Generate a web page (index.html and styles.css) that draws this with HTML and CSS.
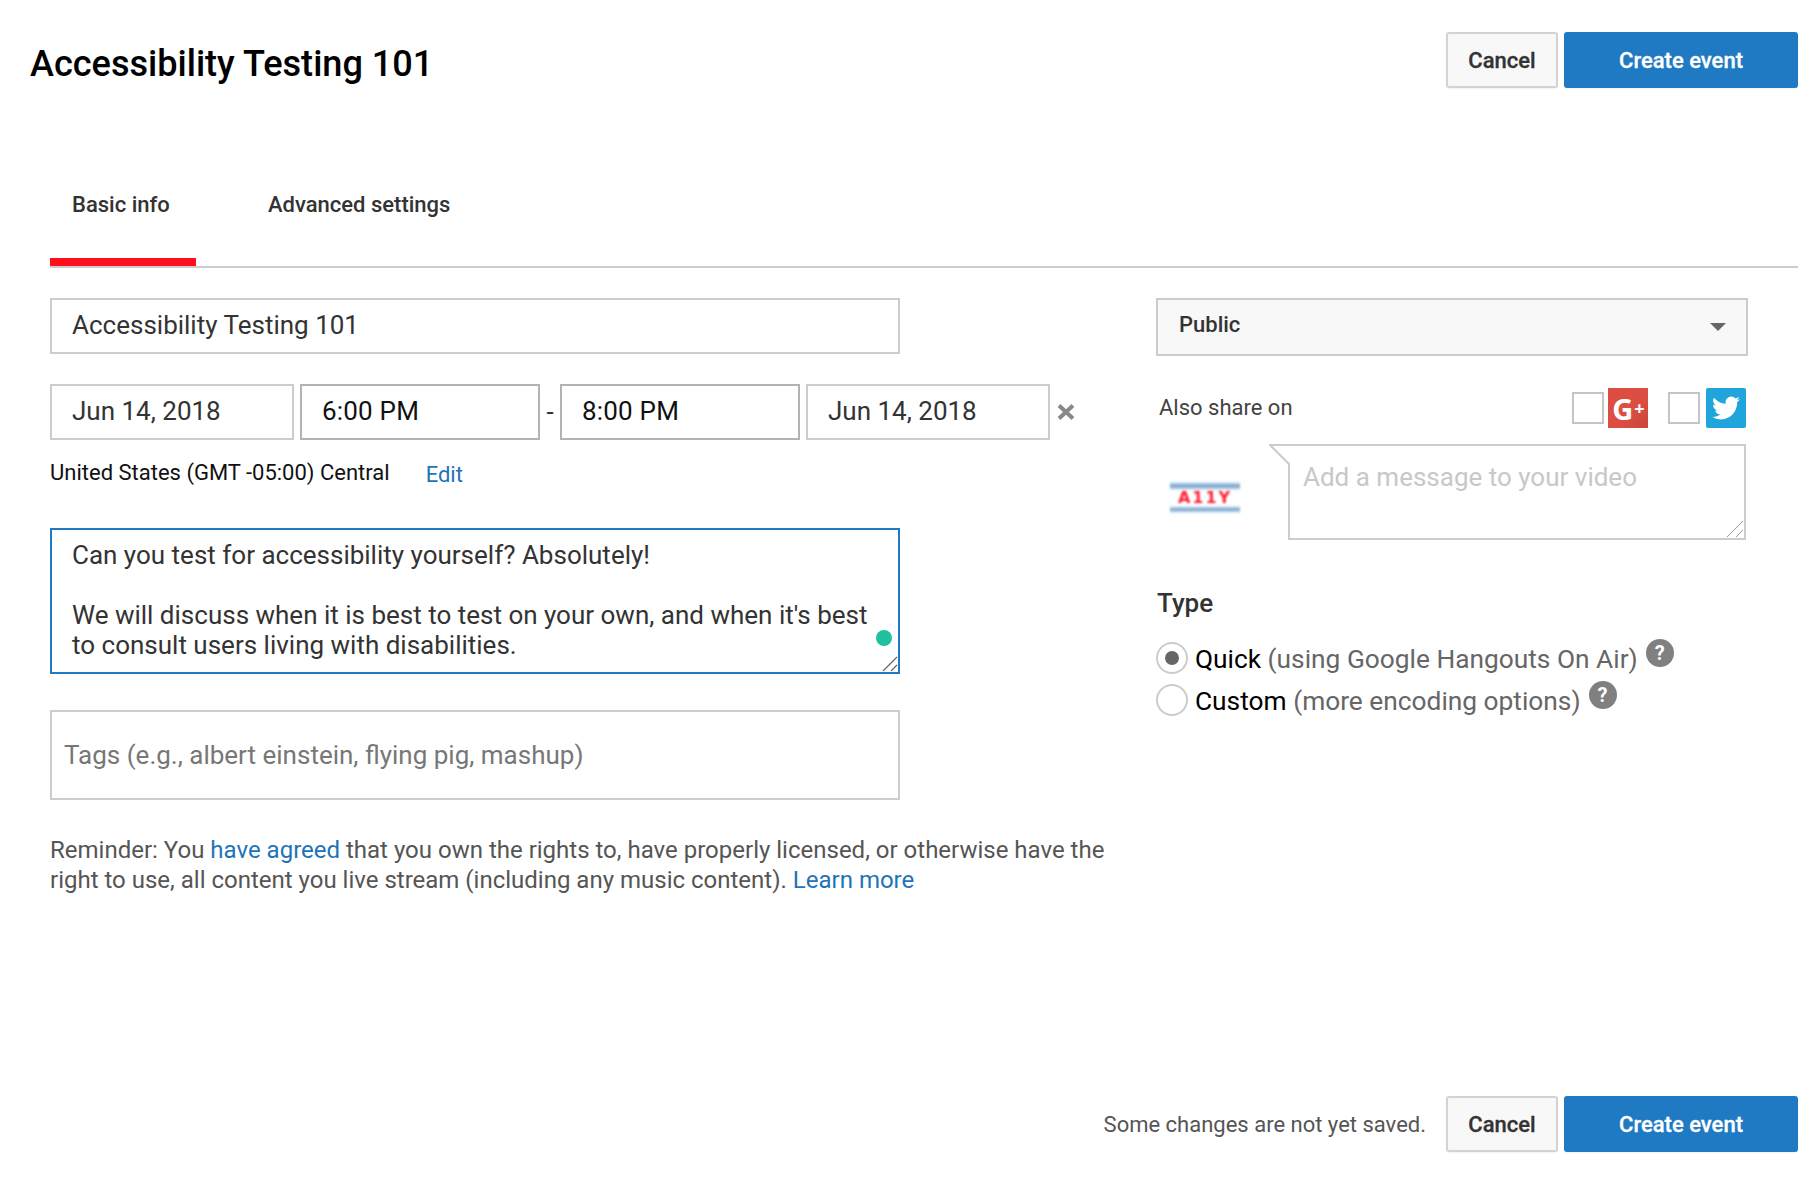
FILE: index.html
```html
<!DOCTYPE html>
<html lang="en">
<head>
    <meta charset="UTF-8">
    <title>Accessibility Testing 101</title>
    <link rel="stylesheet" href="styles.css">
</head>
<body>
    <div class="header">
        <h1>Accessibility Testing 101</h1>
        <div class="actions">
            <button class="btn">Cancel</button>
            <button class="btn primary">Create event</button>
        </div>
    </div>

    <div class="tabs">
        <div class="tab active">Basic info</div>
        <div class="tab">Advanced settings</div>
    </div>

    <div class="columns">
        <div class="left">
            <div class="field title-field">Accessibility Testing 101</div>

            <div class="date-row">
                <div class="field date">Jun 14, 2018</div>
                <div class="field time">6:00 PM</div>
                <span class="dash">-</span>
                <div class="field time">8:00 PM</div>
                <div class="field date">Jun 14, 2018</div>
                <svg class="clear" width="18" height="16" viewBox="0 0 18 16"><path d="M2 1.5 16 14.500M16 1.500 2 14.500" stroke="#888" stroke-width="4"/></svg>
            </div>

            <div class="timezone">
                <span>United States (GMT -05:00) Central</span>
                <a class="edit" href="#">Edit</a>
            </div>

            <div class="field description">
                <p>Can you test for accessibility yourself? Absolutely!</p>
                <p>We will discuss when it is best to test on your own, and when it's best<br>to consult users living with disabilities.</p>
                <span class="dot"></span>
                <svg class="resizer" width="16" height="16" viewBox="0 0 16 16"><path d="M1 15 15 1M9 15 15 9" stroke="#666" stroke-width="1.200"/></svg>
            </div>

            <div class="field tags">Tags (e.g., albert einstein, flying pig, mashup)</div>

            <p class="reminder">Reminder: You <a href="#">have agreed</a> that you own the rights to, have properly licensed, or otherwise have the<br>right to use, all content you live stream (including any music content). <a href="#">Learn more</a></p>
        </div>

        <div class="right">
            <div class="select">
                <span>Public</span>
                <span class="arrow"></span>
            </div>

            <div class="share-row">
                <span class="share-label">Also share on</span>
                <span class="check"></span>
                <span class="social gplus">G<small>+</small></span>
                <span class="check second"></span>
                <span class="social twitter">
                    <svg width="28" height="28" viewBox="0 0 24 24"><path fill="#fff" d="M23.953 4.57a10 10 0 01-2.825.775 4.958 4.958 0 002.163-2.723c-.951.555-2.005.959-3.127 1.184a4.92 4.92 0 00-8.384 4.482C7.69 8.095 4.067 6.13 1.64 3.162a4.822 4.822 0 00-.666 2.475c0 1.71.87 3.213 2.188 4.096a4.904 4.904 0 01-2.228-.616v.06a4.923 4.923 0 003.946 4.827 4.996 4.996 0 01-2.212.085 4.936 4.936 0 004.604 3.417 9.867 9.867 0 01-6.102 2.105c-.39 0-.779-.023-1.17-.067a13.995 13.995 0 007.557 2.209c9.053 0 13.998-7.496 13.998-13.985 0-.21 0-.42-.015-.63A9.935 9.935 0 0024 4.59z"/></svg>
                </span>
            </div>

            <div class="message-row">
                <div class="thumb">
                    <div class="band"></div>
                    <div class="thumb-title">A11Y</div>
                    <div class="band small"></div>
                </div>
                <div class="message">
                    Add a message to your video
                    <svg class="tail" width="22" height="22" viewBox="0 0 22 22"><path d="M21 21V2H2L21 21Z" fill="#fff"/><path d="M22 1H1L21 21" stroke="#ccc" stroke-width="2" fill="none"/></svg>
                    <svg class="resizer" width="18" height="18" viewBox="0 0 18 18"><path d="M1 17 17 1M10 17 17 10" stroke="#999" stroke-width="1"/></svg>
                </div>
            </div>

            <h2 class="type-title">Type</h2>
            <div class="radio-row">
                <span class="radio checked"></span>
                <span class="radio-label">Quick <span class="note">(using Google Hangouts On Air)</span></span>
                <span class="help">?</span>
            </div>
            <div class="radio-row">
                <span class="radio"></span>
                <span class="radio-label">Custom <span class="note">(more encoding options)</span></span>
                <span class="help">?</span>
            </div>
        </div>
    </div>

    <div class="footer">
        <span class="saved">Some changes are not yet saved.</span>
        <button class="btn">Cancel</button>
        <button class="btn primary">Create event</button>
    </div>
</body>
</html>
```

FILE: styles.css
```css
body {
    margin: 0;
    padding: 0;
    height: 1180px;
    overflow: hidden;
    position: relative;
    background-color: #fff;
    font-family: Roboto, Arial, sans-serif;
    color: #333;
}

a {
    color: #1f73b7;
    text-decoration: none;
}

/* header */
.header {
    display: flex;
    justify-content: space-between;
    padding: 32px 18px 0 30px;
}

h1 {
    margin: 0;
    font-size: 36.100px;
    font-weight: 500;
    line-height: 64px;
    color: #000;
}

.actions {
    display: flex;
    gap: 6px;
}

.btn {
    height: 56px;
    width: 112px;
    font-family: Roboto, Arial, sans-serif;
    font-size: 22px;
    font-weight: 500;
    -webkit-text-stroke: 0.3px;
    color: #333;
    background-color: #f8f8f8;
    border: 2px solid #d3d3d3;
    border-radius: 3px;
    box-shadow: 0 1px 2px rgba(0, 0, 0, 0.06);
    padding: 0;
}

.btn.primary {
    width: 234px;
    color: #fff;
    background-color: #2079c3;
    border-color: #2079c3;
}

/* tabs */
.tabs {
    display: flex;
    margin: 96px 18px 0 50px;
    border-bottom: 2px solid #ccc;
}

.tab {
    font-size: 22px;
    font-weight: 500;
    line-height: 26px;
    padding: 0 0 40px 22px;
    border-bottom: 8px solid transparent;
    margin-right: 50px;
}

.tab.active {
    width: 124px;
    border-color: #ff0f1e;
}

/* two columns */
.columns {
    display: flex;
    margin-top: 30px;
    padding-left: 50px;
}

.left {
    width: 1106px;
}

.right {
    width: 592px;
}

.field {
    box-sizing: border-box;
    border: 2px solid #ccc;
    font-size: 26px;
    line-height: 30px;
    color: #333;
}

.title-field {
    width: 850px;
    height: 56px;
    padding: 10px 20px;
}

.date-row {
    display: flex;
    align-items: center;
    margin-top: 30px;
}

.date {
    width: 244px;
    height: 56px;
    padding: 10px 20px;
}

.time {
    width: 240px;
    height: 56px;
    padding: 10px 20px;
    margin-left: 6px;
    border-color: #b3b3b3;
    color: #111;
    letter-spacing: 0.2px;
}

.dash {
    width: 20px;
    font-size: 26px;
    text-align: center;
    margin-right: -6px;
}

.time + .field.date {
    margin-left: 6px;
}

.clear {
    margin-left: 7px;
}

.timezone {
    display: flex;
    margin-top: 18px;
    font-size: 22px;
    line-height: 30px;
    color: #111;
}

.edit {
    margin-left: 36px;
    margin-top: 2px;
}

.description {
    position: relative;
    width: 850px;
    height: 146px;
    margin-top: 38px;
    padding: 10px 20px;
    border-color: #2079c3;
}

.description p {
    margin: 0 0 30px;
}

.dot {
    position: absolute;
    right: 6px;
    bottom: 26px;
    width: 16px;
    height: 16px;
    border-radius: 50%;
    background-color: #20c19e;
}

.resizer {
    position: absolute;
    right: 0;
    bottom: 0;
}

.tags {
    display: flex;
    align-items: center;
    width: 850px;
    height: 90px;
    margin-top: 36px;
    padding-left: 12px;
    color: #777;
}

.reminder {
    margin: 36px 0 0;
    font-size: 24px;
    line-height: 29.500px;
    color: #555;
}

/* right column */
.select {
    box-sizing: border-box;
    display: flex;
    justify-content: space-between;
    align-items: center;
    width: 592px;
    height: 58px;
    padding: 0 20px 6px 21px;
    background-color: #f8f8f8;
    border: 2px solid #ccc;
    font-size: 22px;
    font-weight: 500;
}

.arrow {
    width: 0;
    height: 0;
    margin-top: 6px;
    border-left: 8px solid transparent;
    border-right: 8px solid transparent;
    border-top: 8px solid #666;
}

.share-row {
    display: flex;
    align-items: center;
    margin-top: 32px;
    padding-left: 3px;
    height: 40px;
}

.share-label {
    width: 413px;
    padding-bottom: 2px;
    font-size: 22px;
    color: #444;
}

.check {
    box-sizing: border-box;
    width: 32px;
    height: 32px;
    border: 2px solid #c4c4c4;
}

.check.second {
    margin-left: 20px;
}

.social {
    display: flex;
    align-items: center;
    justify-content: center;
    width: 40px;
    height: 40px;
    margin-left: 4px;
    color: #fff;
    font-family: "Open Sans", Arial, sans-serif;
}

.gplus {
    background: linear-gradient(135deg, #dc4e41 60%, #c9463b);
    font-size: 29px;
    font-weight: 700;
    letter-spacing: -1px;
}

.gplus small {
    font-size: 18px;
    margin-left: 2px;
}

.twitter {
    margin-left: 6px;
    background-color: #1fa5dc;
    border-radius: 2px;
}

.message-row {
    display: flex;
    margin-top: 16px;
}

.thumb {
    box-sizing: border-box;
    width: 132px;
    padding: 38px 0 0 14px;
    filter: blur(0.8px);
}

.band {
    width: 70px;
    height: 8px;
    background: linear-gradient(#c5e3f7 30%, #8fadcc 30% 70%, #c5e3f7 70%);
}

.band.small {
    height: 7px;
}

.thumb-title {
    width: 70px;
    height: 16px;
    text-align: center;
    font-family: "DejaVu Sans", sans-serif;
    font-size: 16px;
    line-height: 16px;
    font-weight: 700;
    letter-spacing: 2px;
    color: #ff1a2c;
}

.message {
    position: relative;
    box-sizing: border-box;
    width: 458px;
    height: 96px;
    padding: 16px 0 0 13px;
    border: 2px solid #ccc;
    font-size: 26px;
    line-height: 30px;
    color: #c8c8c8;
}

.tail {
    position: absolute;
    left: -21px;
    top: -2px;
}

.type-title {
    margin: 45px 0 0 1px;
    font-size: 26px;
    font-weight: 500;
    line-height: 36px;
}

.radio-row {
    display: flex;
    align-items: center;
    height: 42px;
}

.type-title + .radio-row {
    margin-top: 16px;
}

.radio {
    box-sizing: border-box;
    position: relative;
    width: 32px;
    height: 32px;
    border: 2px solid #ccc;
    border-radius: 50%;
    background-color: #fff;
}

.radio.checked::after {
    content: "";
    position: absolute;
    left: 7px;
    top: 7px;
    width: 14px;
    height: 14px;
    border-radius: 50%;
    background-color: #666;
}

.radio-label {
    margin-left: 7px;
    padding-top: 2px;
    font-size: 26.300px;
    color: #000;
}

.note {
    color: #666;
}

.help {
    display: flex;
    align-items: center;
    justify-content: center;
    width: 28px;
    height: 28px;
    margin: -10px 0 0 8px;
    border-radius: 50%;
    background-color: #808080;
    color: #fff;
    font-size: 20px;
    font-weight: 700;
}

/* footer */
.footer {
    position: absolute;
    right: 18px;
    bottom: 28px;
    display: flex;
    align-items: center;
    gap: 6px;
}

.saved {
    margin-right: 14px;
    font-size: 22px;
    color: #555;
}
```
